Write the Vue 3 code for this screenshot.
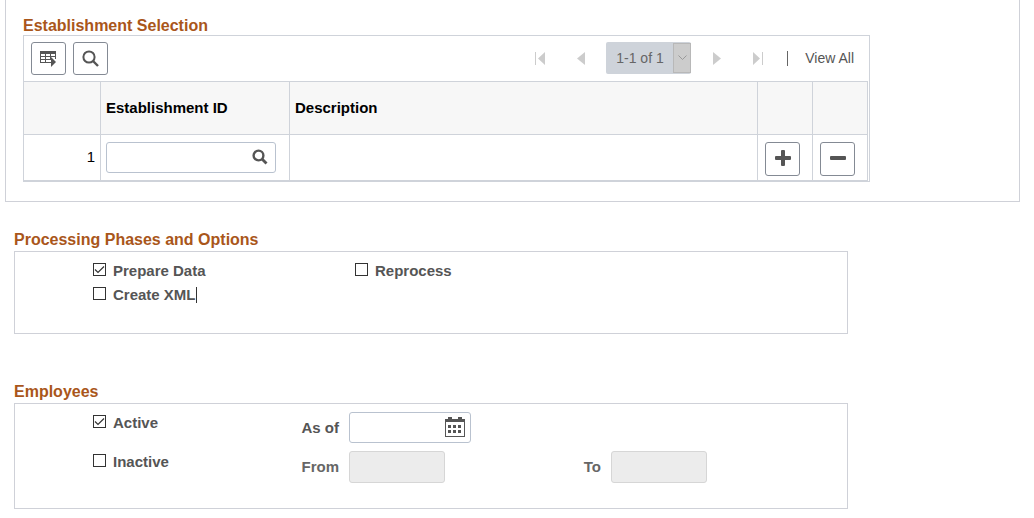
<script setup>
import { ref } from 'vue'

const establishmentId = ref('')
const range = ref('1-1 of 1')
const prepareData = ref(true)
const createXml = ref(false)
const reprocess = ref(false)
const active = ref(true)
const inactive = ref(false)
const asOf = ref('')
</script>

<template>
  <main class="page">
    <section class="panel">
      <h2 class="title">Establishment Selection</h2>
      <div class="grid-box">
        <div class="toolbar">
          <button type="button" class="tool" aria-label="Personalize grid">
            <svg width="17" height="16" viewBox="0 0 17 16" shape-rendering="crispEdges">
              <path fill="#555" d="M0 0h16v3H0z" />
              <path fill="none" stroke="#555" d="M.5 3v9M5.5 3v9M10.5 3v5M15.5 3v5M0 5.5h16M0 8.5h11M0 11.5h11" />
              <path fill="#555" d="M11 6l5 5-5 5z" shape-rendering="auto" />
            </svg>
          </button>
          <button type="button" class="tool" aria-label="Find">
            <svg width="17" height="17" viewBox="0 0 17 17" fill="none" stroke="#555">
              <circle cx="7" cy="7" r="5.6" stroke-width="2" />
              <path d="M11 11l5 5" stroke-width="2.4" />
            </svg>
          </button>
          <nav class="pager" aria-label="Rows">
            <button type="button" class="nav" disabled aria-label="First">
              <svg width="10" height="13" viewBox="0 0 10 13"><path fill="#ccc" d="M0 0h1v13H0zM10 0v13L3 6.5z" /></svg>
            </button>
            <button type="button" class="nav prev" disabled aria-label="Previous">
              <svg width="8" height="13" viewBox="0 0 8 13"><path fill="#ccc" d="M8 0v13L0 6.5z" /></svg>
            </button>
            <span class="range">
              <select v-model="range" disabled aria-label="Row range">
                <option>1-1 of 1</option>
              </select>
              <span class="arrow">
                <svg width="9" height="6" viewBox="0 0 9 6"><path fill="none" stroke="#999" d="M.5.5l4 4 4-4" /></svg>
              </span>
            </span>
            <button type="button" class="nav next" disabled aria-label="Next">
              <svg width="8" height="13" viewBox="0 0 8 13"><path fill="#ccc" d="M0 0v13l8-6.5z" /></svg>
            </button>
            <button type="button" class="nav" disabled aria-label="Last">
              <svg width="10" height="13" viewBox="0 0 10 13"><path fill="#ccc" d="M9 0h1v13H9zM0 0v13l7-6.5z" /></svg>
            </button>
            <span class="divider"></span>
            <a href="#" class="view-all">View All</a>
          </nav>
        </div>
        <table>
          <colgroup>
            <col class="c-num" />
            <col class="c-id" />
            <col />
            <col class="c-act" />
            <col class="c-act" />
          </colgroup>
          <thead>
            <tr>
              <th></th>
              <th scope="col">Establishment ID</th>
              <th scope="col">Description</th>
              <th></th>
              <th></th>
            </tr>
          </thead>
          <tbody>
            <tr>
              <td class="num">1</td>
              <td class="id">
                <span class="field lookup">
                  <input v-model="establishmentId" type="text" aria-label="Establishment ID" />
                  <button type="button" class="inner" aria-label="Look up Establishment ID">
                    <svg width="16" height="16" viewBox="0 0 16 16" fill="none" stroke="#555">
                      <circle cx="6.5" cy="6.5" r="4.9" stroke-width="2.4" />
                      <path d="M10 10l4.5 4.5" stroke-width="2.8" />
                    </svg>
                  </button>
                </span>
              </td>
              <td></td>
              <td class="act">
                <button type="button" class="tool row-tool" aria-label="Add row">
                  <svg width="16" height="16" viewBox="0 0 16 16"><path fill="#555" d="M6 1q0-1 1-1h2q1 0 1 1v5h5q1 0 1 1v2q0 1-1 1h-5v5q0 1-1 1H7q-1 0-1-1v-5H1q-1 0-1-1V7q0-1 1-1h5z" /></svg>
                </button>
              </td>
              <td class="act">
                <button type="button" class="tool row-tool" aria-label="Delete row">
                  <svg width="16" height="16" viewBox="0 0 16 16"><rect fill="#555" y="6" width="16" height="4" rx="1" /></svg>
                </button>
              </td>
            </tr>
          </tbody>
        </table>
      </div>
    </section>

    <section class="group phases">
      <h2 class="title">Processing Phases and Options</h2>
      <div class="box options">
        <label class="check"><input v-model="prepareData" type="checkbox" />Prepare Data</label>
        <label class="check"><input v-model="reprocess" type="checkbox" />Reprocess</label>
        <label class="check"><input v-model="createXml" type="checkbox" /><span class="caret">Create XML</span></label>
      </div>
    </section>

    <section class="group employees">
      <h2 class="title">Employees</h2>
      <div class="box people">
        <label class="check"><input v-model="active" type="checkbox" />Active</label>
        <label class="caption" for="as-of">As of</label>
        <span class="field date">
          <input id="as-of" v-model="asOf" type="text" />
          <button type="button" class="inner" aria-label="Choose a date">
            <svg width="20" height="20" viewBox="0 0 20 20" shape-rendering="crispEdges">
              <path fill="#555" d="M3 0h4v2h6V0h4v2h3v18H0V2h3z" />
              <path fill="#fff" d="M1 5h18v14H1z" />
              <path fill="#555" d="M3 8h3v3H3zM8 8h3v3H8zM13 8h3v3h-3zM3 13h3v3H3zM8 13h3v3H8zM13 13h3v3h-3z" />
            </svg>
          </button>
        </span>
        <label class="check second"><input v-model="inactive" type="checkbox" />Inactive</label>
        <label class="caption muted" for="from">From</label>
        <input id="from" class="off" type="text" disabled />
        <label class="caption muted" for="to">To</label>
        <input id="to" class="off" type="text" disabled />
      </div>
    </section>
  </main>
</template>

<style>
body {
  background: #fff;
}
</style>

<style scoped>
.page {
  display: flow-root;
  font: 15px/20px "Liberation Sans", Arial, sans-serif;
  color: #000;
}
.page *,
.page {
  box-sizing: border-box;
}
button,
input,
select {
  margin: 0;
  padding: 0;
  font: inherit;
}
.title {
  margin: 0;
  font-size: 16px;
  line-height: 18px;
  font-weight: bold;
  color: #a9561a;
}
.panel {
  margin: 0 14px 0 5px;
  padding: 17px 17px 19px;
  border: solid #cfd1d8;
  border-width: 0 1px 1px;
}
.grid-box {
  max-width: 847px;
  border: 1px solid #cfd3da;
  padding-right: 1px;
}
.toolbar {
  display: flex;
  align-items: flex-start;
  gap: 7px;
  padding: 6px 14px 6px 7px;
}
.tool {
  display: flex;
  align-items: center;
  justify-content: center;
  width: 35px;
  height: 33px;
  border: 1px solid #848a94;
  border-radius: 3px;
  background: #fff;
}
.row-tool {
  height: 34px;
  padding-bottom: 2px;
}
.pager {
  display: flex;
  align-items: center;
  margin-left: auto;
  font-size: 14px;
}
.nav {
  display: flex;
  border: 0;
  background: none;
}
.prev {
  margin: 0 21px 0 32px;
}
.next {
  margin: 0 32px 0 22px;
}
.range {
  display: flex;
  position: relative;
}
.range select {
  appearance: none;
  width: 85px;
  height: 32px;
  padding-left: 10px;
  border: 0;
  border-radius: 2px;
  background: #ced3da;
  color: #666;
  opacity: 1;
}
.arrow {
  position: absolute;
  top: 1px;
  right: 0;
  bottom: 1px;
  display: flex;
  align-items: center;
  justify-content: center;
  width: 18px;
  border: 1px solid #b8b8b8;
  background: #ccc;
  pointer-events: none;
}
.divider {
  width: 1px;
  height: 15px;
  margin: 0 17px 0 24px;
  background: #666;
}
.view-all {
  color: #555;
  text-decoration: none;
}
table {
  width: 100%;
  table-layout: fixed;
  border-collapse: separate;
  border-spacing: 0;
}
.c-num {
  width: 77px;
}
.c-id {
  width: 189px;
}
.c-act {
  width: 55px;
}
th,
td {
  padding: 0 5px;
  border-right: 1px solid #cfd3da;
  border-bottom: 1px solid #cfd3da;
  text-align: left;
}
th {
  height: 54px;
  border-top: 1px solid #cfd3da;
  background: #f7f7f7;
}
td {
  height: 46px;
}
td.num {
  padding-bottom: 2px;
  text-align: right;
}
td.act {
  padding: 3px 0 0 7px;
}
.field {
  display: flex;
  position: relative;
  height: 31px;
}
.field input {
  width: 100%;
  height: 100%;
  padding: 0 32px 0 6px;
  border: 1px solid #b9c2cf;
  border-radius: 3px;
  background: #fff;
}
.lookup {
  width: 170px;
}
.date {
  width: 122px;
}
.inner {
  position: absolute;
  top: 0;
  right: 6px;
  bottom: 1px;
  display: flex;
  align-items: center;
  border: 0;
  background: none;
}
.lookup .inner {
  right: 8px;
}
.group {
  max-width: 834px;
  margin-left: 14px;
}
.phases {
  margin-top: 29px;
}
.employees {
  margin-top: 49px;
}
.box {
  display: grid;
  margin-top: 2px;
  padding-left: 78px;
  border: 1px solid #cfd1d8;
  color: #555;
  font-weight: bold;
}
.options {
  grid-template-columns: 262px auto;
  grid-auto-rows: 24px;
  padding-top: 7px;
  padding-bottom: 26px;
}
.check {
  display: flex;
  align-items: center;
  gap: 7px;
}
.check input {
  appearance: none;
  width: 13px;
  height: 13px;
  margin-bottom: 3px;
  border: 1px solid #333;
  background: #fff;
}
.check input:checked {
  background: #fff url("data:image/svg+xml,%3Csvg xmlns='http://www.w3.org/2000/svg' viewBox='0 0 11 11'%3E%3Cpath d='M1 5.5l3 3L10 2.5' fill='none' stroke='%23333' stroke-width='1.2'/%3E%3C/svg%3E");
}
.caret {
  border-right: 1px solid #333;
  line-height: 16px;
}
.people {
  grid-template-columns: 207px 49px 234px 28px auto;
  grid-auto-rows: 39px;
  align-items: center;
  padding-top: 4px;
  padding-bottom: 22px;
}
.people .check {
  align-self: start;
  padding-top: 5px;
}
.second {
  grid-column: 1;
}
.caption {
  padding-right: 10px;
  text-align: right;
  white-space: nowrap;
}
.muted {
  color: #666;
}
.off {
  width: 96px;
  height: 32px;
  border: 1px solid #d6d6d6;
  border-radius: 3px;
  background: #ececec;
}
</style>
